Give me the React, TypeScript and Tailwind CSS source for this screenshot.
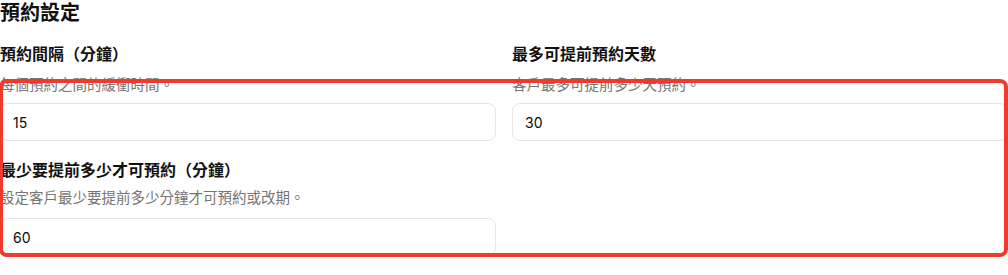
import React from "react";

const font = { fontFamily: 'Inter, "Noto Sans CJK TC", "Noto Sans CJK SC", sans-serif' };

function Field({
  label,
  desc,
  value,
  labelMt,
  descMt,
  inputMt,
}: {
  label: string;
  desc: string;
  value: string;
  labelMt: string;
  descMt: string;
  inputMt: string;
}) {
  return (
    <div className={`flex flex-col ${labelMt}`}>
      <label className="text-base leading-6 font-semibold text-[#111111]">{label}</label>
      <p className={`text-[14.5px] leading-5 text-[#757575] ${descMt}`}>{desc}</p>
      <input
        readOnly
        value={value}
        className={`${inputMt} h-[38px] w-full rounded-lg border border-[#e5e5e5] bg-white px-3 text-sm text-[#0a0a0a] outline-none`}
        style={font}
      />
    </div>
  );
}

export default function App() {
  return (
    <div className="relative w-[1008px] h-[275px] overflow-hidden bg-white" style={font}>
      <h2 className="text-xl leading-7 font-bold text-[#111111] -mt-px">預約設定</h2>
      <div className="grid grid-cols-2 gap-x-4">
        <Field
          label="預約間隔（分鐘）"
          desc="每個預約之間的緩衝時間。"
          value="15"
          labelMt="mt-[15px]"
          descMt="mt-[9px]"
          inputMt="mt-2"
        />
        <Field
          label="最多可提前預約天數"
          desc="客戶最多可提前多少天預約。"
          value="30"
          labelMt="mt-[15px]"
          descMt="mt-[9px]"
          inputMt="mt-2"
        />
        <Field
          label="最少要提前多少才可預約（分鐘）"
          desc="設定客戶最少要提前多少分鐘才可預約或改期。"
          value="60"
          labelMt="mt-[17px]"
          descMt="mt-[6px]"
          inputMt="mt-[10px]"
        />
      </div>
      <div className="pointer-events-none absolute left-[-1px] top-[79px] h-[178px] w-[1009px] rounded-lg border-4 border-[#ef3b2d]" />
    </div>
  );
}
